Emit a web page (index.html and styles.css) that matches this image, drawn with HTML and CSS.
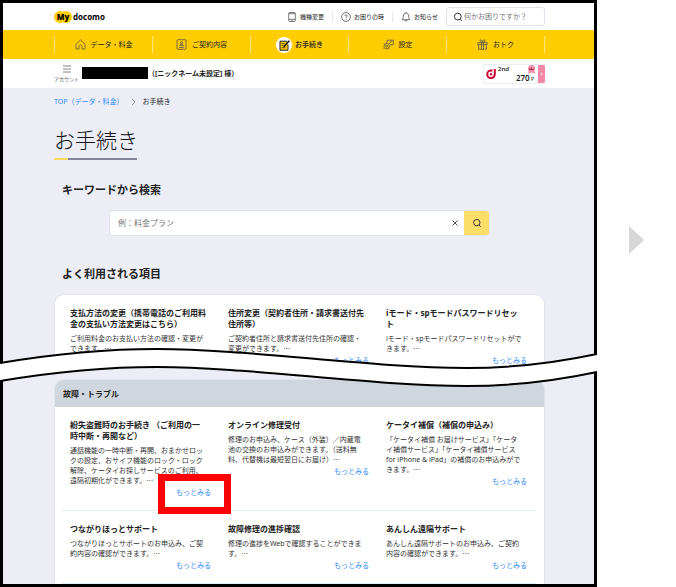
FILE: index.html
```html
<!DOCTYPE html>
<html lang="ja">
<head>
<meta charset="utf-8">
<meta name="viewport" content="width=device-width, initial-scale=1">
<title>お手続き | My docomo</title>
<link rel="stylesheet" href="styles.css">
</head>
<body>
<div class="stage">
  <div class="frame">
    <header>
      <div class="topbar">
        <a class="logo" href="#"><span class="logo-my"><svg class="logo-blob" viewBox="0 0 18 12" aria-hidden="true"><circle cx="6" cy="6" r="6"/><circle cx="12" cy="6" r="6"/></svg><b>My</b></span><span>docomo</span></a>
        <ul class="tools">
          <li><a href="#"><svg class="icon" viewBox="0 0 10 10"><rect x="1.7" y=".5" width="6.6" height="9" rx="1"/><path d="M1.7 7.3h6.6M1.7 1.7h6.6M4.5 8.5h1"/></svg>機種変更</a></li>
          <li><a href="#"><svg class="icon" viewBox="0 0 10 10"><circle cx="5" cy="5" r="4.4"/><path d="M3.8 4.1c0-1.6 2.5-1.5 2.4 0 0 .9-1.2.9-1.2 1.8M5 6.9v.8"/></svg>お困りの時</a></li>
          <li><a href="#"><svg class="icon" viewBox="0 0 10 10"><path d="M1 7.7c1.2-1 1.2-2 1.3-3.7C2.4 2.300 3.500 1.100 5 1.100S7.600 2.300 7.700 4C7.800 5.700 7.800 6.700 9 7.700ZM3.800 8c.2 1.600 2.200 1.600 2.400 0M5 .3v.8"/></svg>お知らせ</a></li>
        </ul>
        <label class="quick"><svg class="icon dark" viewBox="0 0 10 10"><circle cx="4.800" cy="4.600" r="3.400"/><path d="m7.200 7 2 2"/></svg><input type="text" placeholder="何かお困りですか？" aria-label="何かお困りですか？"></label>
      </div>
      <nav>
        <ul class="nav">
          <li><a href="#"><svg class="icon nav-icon" viewBox="0 0 11 11"><path d="M1 5.200 5.500 1 10 5.200V10H7V7.500C7 5.500 4 5.500 4 7.500V10H1Z"/></svg>データ・料金</a></li>
          <li><a href="#"><svg class="icon nav-icon" viewBox="0 0 11 11"><rect x="1" y=".7" width="9" height="9.600" rx="1"/><circle cx="5.500" cy="3.700" r="1"/><path d="M3.700 6.700c0-2 3.600-2 3.600 0ZM3 8.500h5"/></svg>ご契約内容</a></li>
          <li><a class="current" href="#"><svg class="nav-current" viewBox="0 0 16 16"><circle cx="8" cy="8" r="8" fill="#fff"/><path d="M11 4.200H4v9h8V7.500" fill="#ffcd00" stroke="#222"/><path d="M5.500 6.500h3M5.500 8.500h2M5.500 10.700h4" stroke="#222" stroke-width=".7"/><path d="m7.800 9.700 5.500-6" stroke="#111" stroke-width="1.700"/></svg>お手続き</a></li>
          <li><a href="#"><svg class="icon nav-icon" viewBox="0 0 11 11"><circle cx="3.700" cy="7.200" r="2.700"/><circle cx="3.700" cy="7.200" r="1"/><path d="M3.700 4.500V3.200M1.800 5.300l-.8-.9M1.200 8.800l-1 .6M5.600 9.200l.9.9M4 1.200h6.300v4.600H7M4 1.200v2M6.200 5 8 2.200h1.400"/></svg>設定</a></li>
          <li><a href="#"><svg class="icon nav-icon" viewBox="0 0 11 11"><path d="M.8 3.600h9.400v2H.8ZM1.600 5.600v4.700h7.800V5.600M4.500 3.600v6.700M6.500 3.600v6.700M5.500 3.300C3 3.500 2.300 1 3.700.8c1 0 1.500 1.300 1.800 2.500C5.800 2 6.300.8 7.300.8 8.700 1 8 3.500 5.500 3.300Z"/></svg>おトク</a></li>
        </ul>
      </nav>
      <div class="account">
        <button class="menu" type="button"><svg viewBox="0 0 8 8" aria-hidden="true"><path d="M0 1h8M0 4h8M0 7h8"/></svg>アカウント</button>
        <span class="masked"></span>
        <p class="nickname">（[ニックネーム未設定] 様）</p>
        <a class="points" href="#">
          <svg class="dmark" viewBox="0 0 10 10" aria-hidden="true"><path d="M8.800 0v5.300A3.800 3.800 0 1 1 5 1.500H6.500"/><circle cx="5" cy="5.300" r="1.200"/></svg>
          <span class="rank">2nd</span>
          <svg class="medal" viewBox="0 0 10 10" aria-hidden="true"><circle cx="5" cy="4" r="4"/><path d="m2 6-1 3.800 4-1.500 4 1.500L8 6Z"/><path class="crown" d="M2.500 5.500v-2l1.500 1 1-2 1 2 1.500-1v2Z"/></svg>
          <span class="total"><b>270</b> P</span>
          <span class="more">›</span>
        </a>
      </div>
    </header>
    <main>
      <div class="content">
        <nav class="crumbs"><a href="#">TOP（データ・料金）</a><svg viewBox="0 0 5 8" aria-hidden="true"><path d="m1 1 3 3-3 3"/></svg><span>お手続き</span></nav>
        <h1>お手続き</h1>
        <h2>キーワードから検索</h2>
        <form class="search">
          <input type="text" placeholder="例：料金プラン" aria-label="キーワード">
          <button class="clear" type="reset" aria-label="クリア"><svg viewBox="0 0 6 6"><path d="m.5.5 5 5M5.500.5l-5 5"/></svg></button>
          <button class="submit" type="submit" aria-label="検索"><svg class="icon dark" viewBox="0 0 10 10"><circle cx="4.800" cy="4.600" r="3.200"/><path d="m7 7 1.700 1.700"/></svg></button>
        </form>
        <h2>よく利用される項目</h2>
        <section class="card torn">
          <div class="row">
            <article><h3>支払方法の変更（携帯電話のご利用料<br>金の支払い方法変更はこちら）</h3><p>ご利用料金のお支払い方法の確認・変更が<br>できます。<span class="dots">…</span></p><a href="#">もっとみる</a></article>
            <article><h3>住所変更（契約者住所・請求書送付先<br>住所等）</h3><p>ご契約者住所と請求書送付先住所の確認・<br>変更ができます。<span class="dots">…</span></p><a href="#">もっとみる</a></article>
            <article><h3>iモード・spモードパスワードリセッ<br>ト</h3><p>iモード・spモードパスワードリセットがで<br>きます。<span class="dots">…</span></p><a href="#">もっとみる</a></article>
          </div>
        </section>
      </div>
      <div class="tear">
        <svg viewBox="0 0 597 40" preserveAspectRatio="none" aria-hidden="true">
          <path class="band" d="M0 16C60 6 110 2 157 2 250 2 370 21 467 21 510 21 555 16 597 7V25C555 34 510 39 467 39 370 39 250 20 157 20 110 20 60 24 0 34Z"/>
          <path class="edge" d="M0 16C60 6 110 2 157 2 250 2 370 21 467 21 510 21 555 16 597 7M597 25C555 34 510 39 467 39 370 39 250 20 157 20 110 20 60 24 0 34"/>
        </svg>
      </div>
      <div class="content">
        <section class="card">
          <h2 class="card-head">故障・トラブル</h2>
          <div class="row">
            <article><h3>紛失盗難時のお手続き （ご利用の一<br>時中断・再開など）</h3><p>通話機能の一時中断・再開、おまかせロッ<br>クの設定、おサイフ機能のロック・ロック<br>解除、ケータイお探しサービスのご利用、<br>遠隔初期化ができます。<span class="dots">…</span></p><a class="marked" href="#">もっとみる</a></article>
            <article><h3>オンライン修理受付</h3><p>修理のお申込み、ケース（外装）／内蔵電<br>池の交換のお申込みができます。（送料無<br>料、代替機は最短翌日にお届け）<span class="dots">…</span></p><a href="#">もっとみる</a></article>
            <article><h3>ケータイ補償（補償の申込み）</h3><p>「ケータイ補償 お届けサービス」「ケータ<br>イ補償サービス」「ケータイ補償サービス<br>for iPhone &amp; iPad」の補償のお申込みがで<br>きます。<span class="dots">…</span></p><a href="#">もっとみる</a></article>
          </div>
          <div class="row">
            <article><h3>つながりほっとサポート</h3><p>つながりほっとサポートのお申込み、ご契<br>約内容の確認ができます。<span class="dots">…</span></p><a href="#">もっとみる</a></article>
            <article><h3>故障修理の進捗確認</h3><p>修理の進捗をWebで確認することができま<br>す。<span class="dots">…</span></p><a href="#">もっとみる</a></article>
            <article><h3>あんしん遠隔サポート</h3><p>あんしん遠隔サポートのお申込み、ご契約<br>内容の確認ができます。<span class="dots">…</span></p><a href="#">もっとみる</a></article>
          </div>
        </section>
      </div>
    </main>
  </div>
  <div class="next"><svg viewBox="0 0 15 28" aria-hidden="true"><path d="M0 0 15 14 0 28Z"/></svg></div>
</div>
</body>
</html>
```
FILE: styles.css
```css
* { box-sizing: border-box; }

body {
  margin: 0;
  background: #fff;
  color: #222;
  font: 7px/10px "Noto Sans", "Noto Sans CJK JP", sans-serif;
}

h1, h2, h3, p, ul { margin: 0; padding: 0; }
ul { list-style: none; }
a { color: inherit; text-decoration: none; }
button, input { font: inherit; color: inherit; border: 0; padding: 0; margin: 0; background: none; }
input { min-width: 0; outline: 0; }
input::placeholder { color: #777; opacity: 1; }
svg { display: block; flex: none; fill: none; }

.stage { display: flex; min-height: 100vh; }
.frame { flex: 1; border: 3px solid #000; background: #ededf6; }
.next { width: 79px; padding: 226px 0 0 32px; }
.next svg { width: 15px; height: 28px; fill: #d7d7d7; }

.icon { width: 10px; height: 10px; stroke: #555; stroke-width: .8; }
.icon.dark { stroke: #333; stroke-width: 1; }

/* header */
.topbar, .nav, .account, .content { padding: 0 49px 0 51px; }
.topbar { display: flex; align-items: center; height: 27px; background: #fff; }
.logo { display: flex; align-items: center; gap: 1px; margin-right: auto; color: #000; font: 700 8px/12px "Open Sans", sans-serif; }
.logo-my { display: grid; place-items: center; }
.logo-my > * { grid-area: 1 / 1; }
.logo-my b { position: relative; font-weight: 800; }
.logo-blob { width: 18px; height: 12px; fill: #ffcd00; }
.tools { display: flex; font-size: 6px; }
.tools li { padding: 0 8px; border-right: 1px solid #e8e8e8; }
.tools li:last-child { border: 0; }
.tools a { display: flex; align-items: center; gap: 3px; }
.quick { display: flex; align-items: center; gap: 1px; width: 99px; height: 19px; padding: 0 6px; border: 1px solid #dfe2e8; border-radius: 3px; }
.quick input { flex: 1; }

.nav { display: flex; align-items: center; height: 29px; background: #ffcd00; }
.nav li { flex: 1; border-left: 1px solid #ffe680; }
.nav li:last-child { border-right: 1px solid #ffe680; }
.nav a { display: flex; align-items: center; justify-content: center; gap: 5px; height: 17px; }
.nav a.current { gap: 3px; font-weight: 500; }
.nav-icon { width: 11px; height: 11px; }
.nav-current { width: 16px; height: 16px; }

.account { display: flex; align-items: center; height: 29px; background: #fff; }
.menu { display: flex; flex-direction: column; align-items: center; gap: 2px; font-size: 5px; line-height: 8px; color: #555; }
.menu svg { width: 8px; height: 8px; stroke: #666; stroke-width: .8; }
.masked { width: 66px; height: 12px; margin: 0 0 2px 3px; background: #000; }
.nickname { font-weight: 700; }
.points {
  display: grid;
  grid-template: 9px 9px / 14px 1fr 14px 7px;
  align-items: center;
  width: 62px;
  margin-left: auto;
  border: 1px solid #eceef2;
  border-right: 0;
  border-radius: 2px;
  overflow: hidden;
}
.dmark { grid-row: 1 / 3; justify-self: center; width: 10px; height: 10px; stroke: #cc0033; stroke-width: 2; }
.dmark circle { fill: #cc0033; stroke: none; }
.rank { font-size: 6px; font-weight: 600; }
.medal { justify-self: center; width: 9px; height: 9px; fill: #f48fab; }
.crown { fill: #a3304f; }
.total { grid-area: 2 / 2 / 3 / 4; justify-self: end; padding-right: 4px; font-size: 5px; line-height: 8px; white-space: nowrap; }
.total b { font-size: 8px; font-weight: 600; }
.more { grid-area: 1 / 4 / 3 / 5; align-self: stretch; display: grid; place-items: center; background: #f287a6; color: #fff; }

/* page */
.crumbs { display: flex; align-items: center; gap: 8px; padding-top: 8px; line-height: 11px; }
.crumbs a { color: #2f8cff; }
.crumbs svg { width: 5px; height: 8px; stroke: #888; stroke-width: .8; }
.crumbs span { margin-left: -2px; }

h1 {
  width: 83px;
  margin-top: 18px;
  padding-bottom: 3px;
  border-bottom: 2px solid;
  border-image: linear-gradient(90deg, #fbdc60 15px, #85859a 15px) 1;
  font-size: 21px;
  font-weight: 300;
  line-height: 30px;
  white-space: nowrap;
  color: #111;
}
h2 { padding-left: 8px; font-size: 11px; font-weight: 700; line-height: 16px; }
h1 + h2 { margin-top: 22px; }

.search { display: flex; height: 26px; margin: 12px 55px 30px; border: 1px solid #e0e3ea; border-radius: 4px; background: #fff; overflow: hidden; }
.search input { flex: 1; padding-left: 8px; font-size: 8px; }
.clear { display: grid; place-items: center; width: 19px; }
.clear svg { width: 6px; height: 6px; stroke: #555; }
.submit { display: grid; place-items: center; width: 25px; background: #fbdd67; }

.card { border: 1px solid #e0e4ec; border-bottom: 0; border-radius: 10px 10px 0 0; background: #fff; overflow: hidden; }
.search ~ .card { margin-top: 12px; }
.card-head { font-size: 8px; line-height: 27px; background: #cfd6de; }
.row { display: grid; grid-template-columns: repeat(3, 1fr); margin: 0 8px 0 7px; border-bottom: 1px solid #e3ecf2; }
article { display: flex; flex-direction: column; padding: 12px 9px 12px 8px; white-space: nowrap; }
article h3 { margin-bottom: 5px; font-size: 8px; font-weight: 700; line-height: 11px; }
article p { color: #333; }
article a { align-self: flex-end; margin-top: 1px; line-height: 11px; color: #2f8cff; }
.dots { font-family: "Noto Sans CJK JP", sans-serif; line-height: 1px; }
.torn .row { border: 0; }
.torn article { padding-bottom: 2px; }

.marked { position: relative; }
.marked::after { content: ""; position: absolute; inset: -13px -20px -16px -18px; border: 7px solid #f00; }

.tear { position: relative; z-index: 1; height: 11px; }
.tear svg { position: absolute; top: -21px; left: -3px; width: calc(100% + 6px); height: 40px; }
.band { fill: #fff; }
.edge { stroke: #000; stroke-width: 2; }
```
